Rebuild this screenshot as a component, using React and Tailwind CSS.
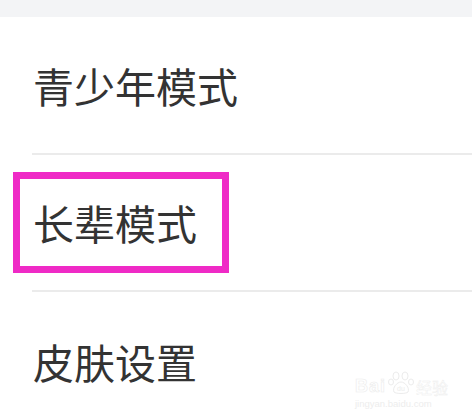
import React from "react";

const font = { fontFamily: '"Noto Sans CJK SC", "Noto Sans", sans-serif' };

function Row({ children, h }) {
  return (
    <div className={`flex items-center pl-[33px] ${h}`}>
      <span className="text-[41px] leading-none text-[#333333]" style={font}>
        {children}
      </span>
    </div>
  );
}

function Divider() {
  return <div className="ml-[32px] h-[2px] bg-[#ebebeb]" />;
}

export default function App() {
  return (
    <div className="relative w-[472px] h-[420px] overflow-hidden bg-white" style={font}>
      <div className="h-[17px] bg-[#f3f4f6]" />
      <Row h="h-[136px]">青少年模式</Row>
      <Divider />
      <Row h="h-[135px]">长辈模式</Row>
      <Divider />
      <Row h="h-[138px]">皮肤设置</Row>

      <div className="absolute left-[13px] top-[172px] w-[216px] h-[101px] border-[7px] border-[#ef2ac6]" />

      <div className="absolute left-[355px] top-[371px] flex flex-col items-start">
        <div className="flex items-end">
          <span className="text-[18px] leading-none font-bold tracking-[1px]" style={{ fontFamily: '"Liberation Sans", sans-serif', WebkitTextStroke: "0.6px #ececec", color: "white" }}>
            Bai
          </span>
          <svg width="28" height="24" viewBox="0 0 28 24" className="mx-[1px]">
            <g fill="none" stroke="#ececec" strokeWidth="1">
              <ellipse cx="9" cy="5" rx="3" ry="4" />
              <ellipse cx="18" cy="5" rx="3" ry="4" />
              <ellipse cx="4" cy="11" rx="2.5" ry="3" />
              <ellipse cx="24" cy="11" rx="2.5" ry="3" />
              <path d="M7 21 C5 17 10 11 14 11 C18 11 23 17 21 21 C19 23 9 23 7 21 Z" />
            </g>
            <text x="14" y="20" textAnchor="middle" fontSize="7" fill="#ececec" fontFamily="Liberation Sans, sans-serif">du</text>
          </svg>
          <span className="text-[16px] leading-none" style={{ ...font, WebkitTextStroke: "0.4px #ececec", color: "white" }}>
            经验
          </span>
        </div>
        <span className="mt-[4px] text-[9.5px] leading-none text-[#ededed]" style={{ fontFamily: '"Liberation Sans", sans-serif' }}>
          jingyan.baidu.com
        </span>
      </div>
    </div>
  );
}
